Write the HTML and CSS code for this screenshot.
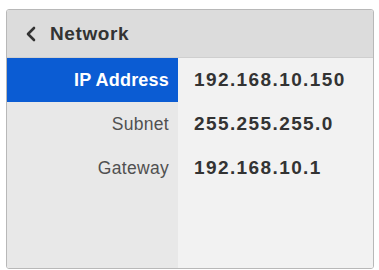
FILE: index.html
```html
<!DOCTYPE html>
<html>
<head>
<meta charset="utf-8">
<link rel="stylesheet" href="styles.css">
</head>
<body>
<div class="panel">
  <div class="header">
    <svg class="chev" width="12" height="16" viewBox="0 0 12 16"><path d="M9 2 L3 8 L9 14" fill="none" stroke="#333" stroke-width="2.6" stroke-linecap="round" stroke-linejoin="round"/></svg>
    <span class="title">Network</span>
  </div>
  <div class="body">
    <div class="label selected">IP Address</div>
    <div class="value">192.168.10.150</div>
    <div class="label">Subnet</div>
    <div class="value">255.255.255.0</div>
    <div class="label">Gateway</div>
    <div class="value">192.168.10.1</div>
  </div>
</div>
</body>
</html>
```
FILE: styles.css
```css
html, body {
  margin: 0;
  padding: 0;
  background: #ffffff;
}
body {
  font-family: "Liberation Sans", Arial, sans-serif;
}
.panel {
  margin: 9px 0 0 6px;
  width: 366px;
  height: 258px;
  border: 1px solid #b8b8b8;
  border-radius: 3px;
  display: flex;
  flex-direction: column;
  overflow: hidden;
}
.header {
  height: 47px;
  flex: none;
  background: #dcdcdc;
  display: flex;
  align-items: center;
  padding-left: 18px;
  gap: 13px;
  border-bottom: 1px solid #cfcfcf;
}
.chev {
  display: block;
}
.title {
  font-size: 19px;
  font-weight: bold;
  color: #333;
  letter-spacing: 0.6px;
}
.body {
  flex: 1;
  display: grid;
  grid-template-columns: 171px 1fr;
  grid-auto-rows: 44px;
  background: linear-gradient(to right, #e8e8e8 171px, #f2f2f2 171px);
}
.label {
  display: flex;
  align-items: center;
  justify-content: flex-end;
  padding-right: 9px;
  font-size: 17.5px;
  color: #505050;
  letter-spacing: 0.3px;
}
.label.selected {
  background: #0b5cd3;
  color: #ffffff;
  font-weight: bold;
  font-size: 18px;
  letter-spacing: 0.2px;
}
.value {
  display: flex;
  align-items: center;
  padding-left: 16px;
  font-size: 19px;
  font-weight: bold;
  color: #333;
  letter-spacing: 1.4px;
}
```
